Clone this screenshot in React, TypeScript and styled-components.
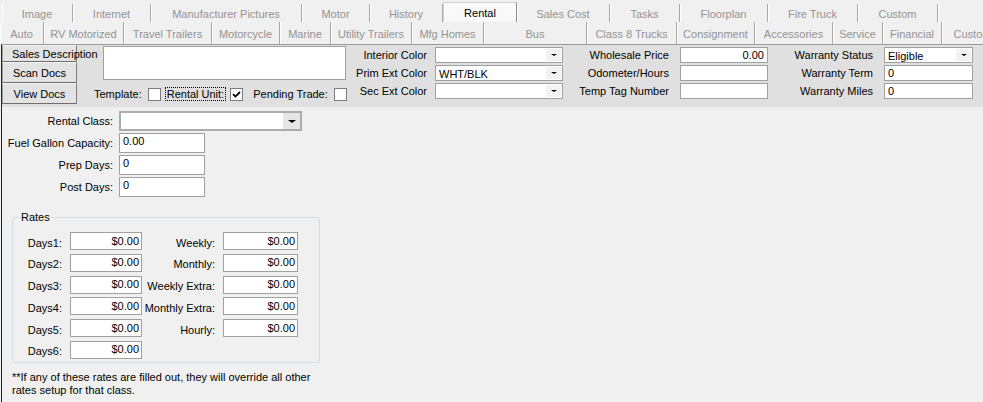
import React from 'react';
import styled, { createGlobalStyle } from 'styled-components';

const Global = createGlobalStyle`
  html, body { margin: 0; padding: 0; background: #f0f0f0; }
  body { font-family: "Liberation Sans", Arial, sans-serif; font-size: 11px; color: #000; }
  * { box-sizing: border-box; }
`;

const Window = styled.div`
  width: 983px;
  height: 402px;
  overflow: hidden;
  background: #f0f0f0;
  display: flex;
  flex-direction: column;
`;

const TabRow = styled.div<{ $pad: number }>`
  display: flex;
  align-items: flex-end;
  height: 22px;
  padding-left: ${p => p.$pad}px;
  white-space: nowrap;
  overflow: hidden;
`;

const Tab = styled.div<{ $w: number; $active?: boolean; $h: number }>`
  flex: 0 0 ${p => p.$w}px;
  height: ${p => p.$h}px;
  display: flex;
  align-items: center;
  justify-content: center;
  padding-top: ${p => (p.$active ? 0 : 1)}px;
  color: ${p => (p.$active ? '#000' : '#939393')};
  background: ${p => (p.$active ? '#f9f9f9' : '#f0f0f0')};
  border-right: 1px solid ${p => (p.$active ? '#8a8a8a' : '#a8a8a8')};
  border-left: ${p => (p.$active ? '1px solid #d0d0d0' : 'none')};
  border-top: ${p => (p.$active ? '1px solid #d0d0d0' : 'none')};
  box-shadow: inset 1px 0 #ffffff;
  overflow: hidden;
`;

const Content = styled.div`
  flex: 1;
  margin-left: 1px;
  border-left: 1px solid #1a1a7a;
  border-top: 1px solid #9a9a9a;
  display: flex;
  flex-direction: column;
`;

const TopPanel = styled.div`
  height: 62px;
  background: #e0e0e0;
  display: flex;
`;

const ButtonCol = styled.div`
  width: 75px;
  display: flex;
  flex-direction: column;
`;

const PanelButton = styled.div<{ $h: number; $left?: boolean }>`
  height: ${p => p.$h}px;
  display: flex;
  align-items: center;
  justify-content: ${p => (p.$left ? 'flex-start' : 'center')};
  padding-left: ${p => (p.$left ? 9 : 0)}px;
  white-space: nowrap;
  overflow: visible;
  background: #e3e3e3;
  border: 1px solid #9a9a9a;
  border-top-color: #f4f4f4;
  border-left-color: #a0a0a0;
  border-bottom-color: #6e6e6e;
  border-right-color: #7e7e7e;
  position: relative;
  z-index: 1;
`;

const DescCol = styled.div`
  width: 258px;
  margin-left: 15px;
  display: flex;
  flex-direction: column;
`;

const DescBox = styled.div`
  margin: 1px 0 0 11px;
  width: 243px;
  height: 34px;
  background: #fff;
  border: 1px solid #a0a0a0;
`;

const CheckRow = styled.div`
  margin-top: 7px;
  height: 14px;
  display: flex;
  align-items: center;
  white-space: nowrap;
`;

const CheckText = styled.span<{ $focus?: boolean }>`
  padding: 0 1px;
  border: 1px dotted ${p => (p.$focus ? '#000' : 'transparent')};
  line-height: 12px;
`;

const Box = styled.span<{ $gap: number }>`
  width: 13px;
  height: 13px;
  margin: 0 ${p => p.$gap}px 0 4px;
  background: #fff;
  border: 1px solid #7c7c7c;
  display: inline-flex;
  align-items: center;
  justify-content: center;
`;

const FieldGrid = styled.div<{ $label: number; $ctrl: number; $gap: number }>`
  display: grid;
  grid-template-columns: ${p => p.$label}px ${p => p.$ctrl}px;
  column-gap: ${p => p.$gap}px;
  grid-auto-rows: 16px;
  row-gap: 2px;
  margin-top: 2px;
  align-items: center;
`;

const RightLabel = styled.div`
  text-align: right;
  white-space: nowrap;
  line-height: 14px;
`;

const Input = styled.div<{ $align?: string; $h?: number }>`
  height: ${p => p.$h ?? 16}px;
  background: #fff;
  border: 1px solid #a0a0a0;
  padding: 0 3px;
  display: flex;
  align-items: ${p => (p.$h && p.$h > 17 ? 'flex-start' : 'center')};
  padding-top: ${p => (p.$h && p.$h > 17 ? 1 : 0)}px;
  justify-content: ${p => (p.$align === 'right' ? 'flex-end' : 'flex-start')};
  white-space: nowrap;
`;

const Combo = styled.div<{ $h: number; $heavy?: boolean }>`
  height: ${p => p.$h}px;
  background: #fff;
  border: ${p => (p.$heavy ? '2px solid #acacac' : '1px solid #a0a0a0')};
  display: flex;
  align-items: stretch;
`;

const ComboText = styled.div`
  flex: 1;
  padding: 1px 0 0 3px;
  display: flex;
  align-items: center;
`;

const ArrowBox = styled.div<{ $heavy?: boolean }>`
  width: ${p => (p.$heavy ? 17 : 15)}px;
  margin: ${p => (p.$heavy ? 0 : '1px')};
  background: ${p => (p.$heavy ? '#e6e6e6' : '#f2f2f2')};
  display: flex;
  align-items: center;
  justify-content: center;
`;

const Tri = styled.span<{ $s: number }>`
  width: 0;
  height: 0;
  border-left: ${p => p.$s}px solid transparent;
  border-right: ${p => p.$s}px solid transparent;
  border-top: ${p => p.$s - 1}px solid #000;
`;

const Lower = styled.div`
  display: flex;
  flex-direction: column;
`;

const ClassGrid = styled.div`
  display: grid;
  grid-template-columns: 111px auto;
  column-gap: 6px;
  row-gap: 2px;
  grid-auto-rows: 20px;
  margin-top: 4px;
  align-items: center;
`;

const Rates = styled.fieldset`
  margin: 14px 0 0 10px;
  width: 308px;
  padding: 0 0 3px 7px;
  border: 1px solid #d5dde3;
  border-radius: 3px;
`;

const Legend = styled.legend`
  padding: 0 1px;
  line-height: 13px;
`;

const RatesGrid = styled.div`
  display: grid;
  grid-template-columns: 50px 72px 81px 75px;
  grid-auto-rows: 18px;
  row-gap: 3.8px;
  margin-top: 8px;
  align-items: center;
`;

const RateLabel = styled.div`
  text-align: right;
  padding-right: 8px;
  white-space: nowrap;
  padding-top: 3px;
`;

const RateInput = styled.div`
  height: 18px;
  background: #fff;
  border: 1px solid #a0a0a0;
  padding: 0 2px 1px 0;
  display: flex;
  align-items: center;
  justify-content: flex-end;
`;

const Note = styled.div`
  margin: 8px 0 0 10px;
  line-height: 13px;
`;

const row1: [string, number][] = [
  ['Image', 71], ['Internet', 78], ['Manufacturer Pictures', 151], ['Motor', 68], ['History', 73],
  ['Rental', 74], ['Sales Cost', 93], ['Tasks', 70], ['Floorplan', 88], ['Fire Truck', 90], ['Custom', 80], ['', 60],
];
const row2: [string, number][] = [
  ['Auto', 44], ['RV Motorized', 80], ['Travel Trailers', 88], ['Motorcycle', 68], ['Marine', 51],
  ['Utility Trailers', 81], ['Mfg Homes', 72], ['Bus', 103], ['Class 8 Trucks', 90], ['Consignment', 78],
  ['Accessories', 78], ['Service', 50], ['Financial', 59], ['Custom', 62],
];

const Check = () => (
  <svg width="9" height="9" viewBox="0 0 9 9">
    <path d="M1 4.2 L3.4 6.6 L8 2" stroke="#000" strokeWidth="1.8" fill="none" />
  </svg>
);

const Arrow = ({ heavy }: { heavy?: boolean }) => (
  <ArrowBox $heavy={heavy}>
    <Tri $s={heavy ? 4 : 3} />
  </ArrowBox>
);

const rateRows: [string, string | null][] = [
  ['Days1:', 'Weekly:'], ['Days2:', 'Monthly:'], ['Days3:', 'Weekly Extra:'],
  ['Days4:', 'Monthly Extra:'], ['Days5:', 'Hourly:'], ['Days6:', null],
];

export default function App() {
  return (
    <Window>
      <Global />
      <TabRow $pad={2}>
        {row1.map(([t, w], i) => (
          <Tab key={i} $w={w} $h={t === 'Rental' ? 20 : 18} $active={t === 'Rental'}>{t}</Tab>
        ))}
      </TabRow>
      <TabRow $pad={0}>
        {row2.map(([t, w], i) => (
          <Tab key={i} $w={w} $h={22}>{t}</Tab>
        ))}
      </TabRow>
      <Content>
        <TopPanel>
          <ButtonCol>
            <PanelButton $h={17} $left>Sales Description</PanelButton>
            <PanelButton $h={21}>Scan Docs</PanelButton>
            <PanelButton $h={21}>View Docs</PanelButton>
          </ButtonCol>
          <DescCol>
            <DescBox />
            <CheckRow>
              <CheckText>Template:</CheckText>
              <Box $gap={4} />
              <CheckText $focus>Rental Unit:</CheckText>
              <Box $gap={8}><Check /></Box>
              <CheckText>Pending Trade:</CheckText>
              <Box $gap={0} />
            </CheckRow>
          </DescCol>
          <FieldGrid $label={77} $ctrl={128} $gap={8}>
            <RightLabel>Interior Color</RightLabel>
            <Combo $h={16}><ComboText /><Arrow /></Combo>
            <RightLabel>Prim Ext Color</RightLabel>
            <Combo $h={16}><ComboText>WHT/BLK</ComboText><Arrow /></Combo>
            <RightLabel>Sec Ext Color</RightLabel>
            <Combo $h={16}><ComboText /><Arrow /></Combo>
          </FieldGrid>
          <FieldGrid $label={106} $ctrl={88} $gap={11}>
            <RightLabel>Wholesale Price</RightLabel>
            <Input $align="right">0.00</Input>
            <RightLabel>Odometer/Hours</RightLabel>
            <Input />
            <RightLabel>Temp Tag Number</RightLabel>
            <Input />
          </FieldGrid>
          <FieldGrid $label={105} $ctrl={89} $gap={11}>
            <RightLabel>Warranty Status</RightLabel>
            <Combo $h={16}><ComboText>Eligible</ComboText><Arrow /></Combo>
            <RightLabel>Warranty Term</RightLabel>
            <Input>0</Input>
            <RightLabel>Warranty Miles</RightLabel>
            <Input>0</Input>
          </FieldGrid>
        </TopPanel>
        <Lower>
          <ClassGrid>
            <RightLabel>Rental Class:</RightLabel>
            <Combo $h={20} $heavy style={{ width: 183 }}><ComboText /><Arrow heavy /></Combo>
            <RightLabel>Fuel Gallon Capacity:</RightLabel>
            <Input $h={20} style={{ width: 86 }}>0.00</Input>
            <RightLabel>Prep Days:</RightLabel>
            <Input $h={20} style={{ width: 86 }}>0</Input>
            <RightLabel>Post Days:</RightLabel>
            <Input $h={20} style={{ width: 86 }}>0</Input>
          </ClassGrid>
          <Rates>
            <Legend>Rates</Legend>
            <RatesGrid>
              {rateRows.map(([l, r]) => (
                <React.Fragment key={l}>
                  <RateLabel>{l}</RateLabel>
                  <RateInput>$0.00</RateInput>
                  {r ? <RateLabel>{r}</RateLabel> : <span />}
                  {r ? <RateInput>$0.00</RateInput> : <span />}
                </React.Fragment>
              ))}
            </RatesGrid>
          </Rates>
          <Note>
            **If any of these rates are filled out, they will override all other
            <br />
            rates setup for that class.
          </Note>
        </Lower>
      </Content>
    </Window>
  );
}
